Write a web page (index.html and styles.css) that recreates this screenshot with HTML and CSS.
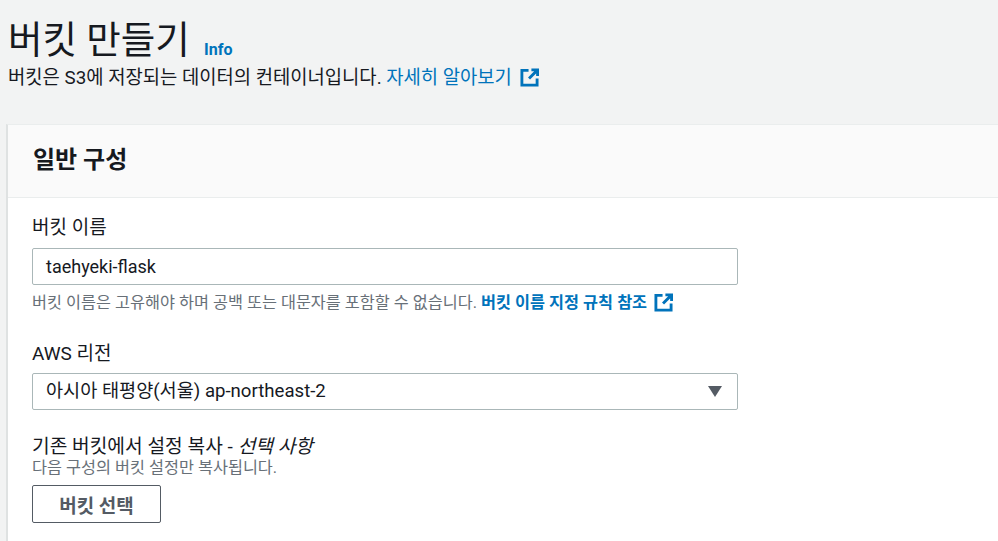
FILE: index.html
```html
<!DOCTYPE html>
<html lang="ko">
<head>
  <meta charset="UTF-8">
  <meta name="viewport" content="width=device-width, initial-scale=1.0">
  <title>버킷 만들기</title>
  <link rel="stylesheet" href="styles.css">
</head>
<body>

  <header class="page-head">
    <h1>버킷 만들기 <a class="info" href="#">Info</a></h1>
    <p class="page-desc">버킷은 S3에 저장되는 데이터의 컨테이너입니다. <a href="#">자세히 알아보기</a>
      <svg class="ext-icon" viewBox="0 0 20 20"><path d="M9 2.500H2v15.500h16V11M12 2h6.500v6.500M18 2.500l-8.500 8.500"/></svg>
    </p>
  </header>

  <section class="card">
    <h2 class="card-title">일반 구성</h2>
    <div class="card-body">

      <div class="field name-field">
        <label>버킷 이름</label>
        <div class="control">taehyeki-flask</div>
        <p class="hint">버킷 이름은 고유해야 하며 공백 또는 대문자를 포함할 수 없습니다. <a href="#">버킷 이름 지정 규칙 참조</a>
          <svg class="ext-icon" viewBox="0 0 20 20"><path d="M9 2.500H2v15.500h16V11M12 2h6.500v6.500M18 2.500l-8.500 8.500"/></svg>
        </p>
      </div>

      <div class="field region-field">
        <label>AWS 리전</label>
        <div class="control select">
          <span>아시아 태평양(서울) ap-northeast-2</span>
          <span class="caret"></span>
        </div>
      </div>

      <div class="field copy-field">
        <label>기존 버킷에서 설정 복사 - <i>선택 사항</i></label>
        <p class="desc">다음 구성의 버킷 설정만 복사됩니다.</p>
        <button class="btn">버킷 선택</button>
      </div>

    </div>
  </section>

</body>
</html>
```

FILE: styles.css
```css
html, body {
  height: 100%;
}

body {
  margin: 0;
  height: 541px;
  overflow: hidden;
  background: #f2f3f3;
  color: #16191f;
  font-family: Roboto, 'Noto Sans CJK KR', sans-serif;
}

a {
  color: #0073bb;
  text-decoration: none;
}

.page-head {
  padding: 18px 8px 0;
  height: 109px;
  box-sizing: border-box;
}

h1 {
  margin: 0;
  height: 48px;
  font-size: 37.500px;
  line-height: 45px;
  font-weight: 400;
}

.info {
  font-size: 16px;
  font-weight: 700;
  margin-left: 5px;
  vertical-align: -2px;
}

.page-desc {
  margin: 0;
  font-size: 18.800px;
  line-height: 24px;
}

.ext-icon {
  width: 19px;
  height: 19px;
  margin-left: 3px;
  vertical-align: -3px;
  fill: none;
  stroke: #0073bb;
  stroke-width: 3;
}

.card {
  margin: 15px 0 0 6px;
  background: #fff;
  border-left: 2px solid #dfe2e2;
  border-top: 1px solid #eaeded;
  height: 420px;
}

.card-title {
  margin: 0;
  height: 72px;
  padding-left: 25px;
  background: #fafafa;
  border-bottom: 1px solid #eaeded;
  font-size: 24px;
  line-height: 70px;
  font-weight: 700;
}

.card-body {
  padding: 17px 0 0 24px;
}

.field {
  width: 706px;
}

label {
  display: block;
  font-size: 19px;
  line-height: 26px;
  margin-bottom: 7px;
}

.control {
  height: 37px;
  box-sizing: border-box;
  border: 1px solid #aab7b8;
  border-radius: 2px;
  padding: 0 13px;
  font-size: 18px;
  line-height: 35px;
  background: #fff;
}

.select {
  display: flex;
  justify-content: space-between;
  align-items: center;
  font-size: 18.600px;
}

.caret {
  width: 0;
  height: 0;
  border-left: 7px solid transparent;
  border-right: 7px solid transparent;
  border-top: 11px solid #545b64;
  margin-right: 2px;
}

.hint {
  margin: 8px 0 0;
  font-size: 16.300px;
  line-height: 20px;
  color: #687078;
}

.hint a {
  font-weight: 700;
}

.hint .ext-icon {
  vertical-align: -4px;
}

.region-field {
  margin-top: 28px;
}

.region-field label {
  margin-bottom: 6px;
}

.copy-field {
  margin-top: 24px;
}

.copy-field label {
  font-size: 19.200px;
  margin-bottom: 0;
}

.desc {
  margin: -1px 0 8px;
  font-size: 16.300px;
  line-height: 18px;
  color: #687078;
}

.btn {
  width: 129px;
  height: 38px;
  background: #fff;
  border: 1px solid #545b64;
  border-radius: 2px;
  color: #545b64;
  font-family: inherit;
  font-size: 19px;
  font-weight: 700;
}
```
